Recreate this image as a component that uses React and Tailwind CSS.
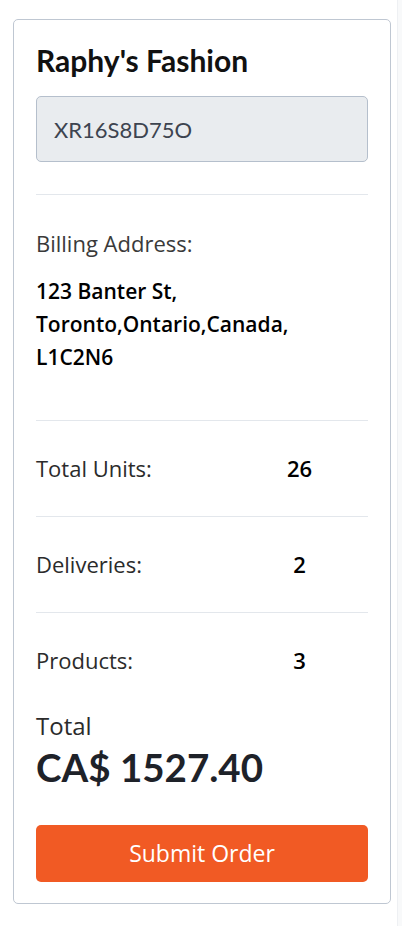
const order = {
  store: "Raphy's Fashion",
  code: "XR16S8D75O",
  address: ["123 Banter St,", "Toronto,Ontario,Canada,", "L1C2N6"],
  stats: [
    { label: "Total Units:", value: "26" },
    { label: "Deliveries:", value: "2" },
    { label: "Products:", value: "3" },
  ],
  total: "CA$ 1527.40",
};

const heading = { fontFamily: "Lato, 'Noto Sans', sans-serif" };
const body = { fontFamily: "'Open Sans', 'Noto Sans', sans-serif" };

export default function App() {
  return (
    <div className="flex w-[402px] min-h-[926px] bg-white" style={body}>
      <div className="flex-1 pl-[13px] pr-[6px] pt-[19px] pb-[21px]">
        <div className="rounded-[5px] border border-[#bfc7d2] bg-white px-[22px] pt-[22px] pb-[21px]">
          <h1
            className="text-[30px] leading-[36px] font-bold text-[#111]"
            style={heading}
          >
            {order.store}
          </h1>

          <div
            className="mt-[18px] flex h-[66px] items-center rounded-[5px] border border-[#b5bfcc] bg-[#e9ecef] px-[17px] text-[22px] text-[#3d4450]"
            style={heading}
          >
            {order.code}
          </div>

          <div className="mt-[32px] border-t border-[#e3e7ec] pt-[32px] pb-[46px]">
            <p className="text-[22px] leading-[33px] text-[#3a3a3a]">
              Billing Address:
            </p>
            <p className="mt-[15px] text-[21px] leading-[33px] font-semibold text-black">
              {order.address.map((line) => (
                <span key={line} className="block">
                  {line}
                </span>
              ))}
            </p>
          </div>

          {order.stats.map((s) => (
            <div
              key={s.label}
              className="grid grid-cols-[195px_1fr] border-t border-[#e3e7ec] py-[31px]"
            >
              <span className="text-[22px] leading-[33px] text-[#2b2b2b]">
                {s.label}
              </span>
              <span className="text-center text-[22px] leading-[33px] font-semibold text-black">
                {s.value}
              </span>
            </div>
          ))}

          <p className="text-[24px] leading-[36px] text-[#2b2b2b]">Total</p>
          <p
            className="text-[38.5px] leading-[46px] font-bold text-[#1e2229]"
            style={heading}
          >
            {order.total}
          </p>

          <button
            type="button"
            className="mt-[35px] flex h-[57px] w-full items-center justify-center rounded-[5px] bg-[#f15a24] text-[23px] text-white"
          >
            Submit Order
          </button>
        </div>
      </div>
      <div className="w-[5px] shrink-0 border-l border-[#eef0f3] bg-[#f8f9fa]" />
    </div>
  );
}
